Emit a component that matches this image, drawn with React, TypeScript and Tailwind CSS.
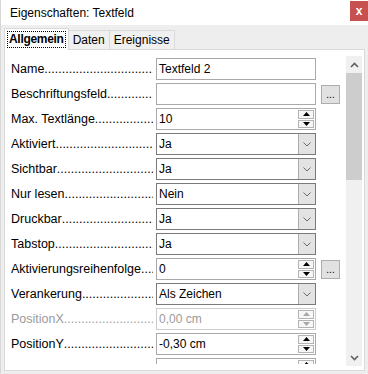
import React from 'react';

type Row = {
  label: string;
  kind: 'text' | 'spin' | 'select';
  value: string;
  button?: boolean;
  disabled?: boolean;
};

const rows: Row[] = [
  { label: 'Name', kind: 'text', value: 'Textfeld 2' },
  { label: 'Beschriftungsfeld', kind: 'text', value: '', button: true },
  { label: 'Max. Textlänge', kind: 'spin', value: '10' },
  { label: 'Aktiviert', kind: 'select', value: 'Ja' },
  { label: 'Sichtbar', kind: 'select', value: 'Ja' },
  { label: 'Nur lesen', kind: 'select', value: 'Nein' },
  { label: 'Druckbar', kind: 'select', value: 'Ja' },
  { label: 'Tabstop', kind: 'select', value: 'Ja' },
  { label: 'Aktivierungsreihenfolge', kind: 'spin', value: '0', button: true },
  { label: 'Verankerung', kind: 'select', value: 'Als Zeichen' },
  { label: 'PositionX', kind: 'spin', value: '0,00 cm', disabled: true },
  { label: 'PositionY', kind: 'spin', value: '-0,30 cm' },
  { label: 'Breite', kind: 'spin', value: '10,01 cm' },
];

const DOTS = '.'.repeat(80);

function Triangle({ up, disabled }: { up?: boolean; disabled?: boolean }) {
  return (
    <svg width="7" height="4" viewBox="0 0 7 4">
      <path
        d={up ? 'M0 4 L3.5 0 L7 4 Z' : 'M0 0 L3.5 4 L7 0 Z'}
        fill={disabled ? '#a8a8a8' : '#000'}
      />
    </svg>
  );
}

function Spin({ disabled }: { disabled?: boolean }) {
  return (
    <div className="flex h-full w-[17px] flex-col gap-[1px] py-[1px] pr-[1px]">
      <div className="flex flex-1 items-center justify-center border border-[#b4b4b4] bg-[#f7f7f7]">
        <Triangle up disabled={disabled} />
      </div>
      <div className="flex flex-1 items-center justify-center border border-[#b4b4b4] bg-[#f7f7f7]">
        <Triangle disabled={disabled} />
      </div>
    </div>
  );
}

function Field({ row }: { row: Row }) {
  const border =
    row.kind === 'select'
      ? 'border-[#7a7a7a]'
      : row.disabled
        ? 'border-[#cccccc]'
        : 'border-[#a9a9a9]';
  return (
    <div className={`flex h-[22px] w-[160px] items-center border ${border} bg-white`}>
      <span
        className={`flex-1 truncate pl-[2px] text-[12px] ${row.disabled ? 'text-[#9a9a9a]' : 'text-black'}`}
      >
        {row.value}
      </span>
      {row.kind === 'spin' && <Spin disabled={row.disabled} />}
      {row.kind === 'select' && (
        <div className="flex h-full w-[17px] items-center justify-center border-l border-[#adadad] bg-[#e3e3e3]">
          <svg width="8" height="5" viewBox="0 0 8 5">
            <path d="M0.5 0.5 L4 4 L7.5 0.5" fill="none" stroke="#6a6a6a" strokeWidth="1" />
          </svg>
        </div>
      )}
    </div>
  );
}

export default function App() {
  return (
    <div
      className="flex h-[374px] w-[368px] flex-col overflow-hidden border-l border-[#d8d8d8] bg-[#eeeeee] text-black"
      style={{ fontFamily: '"Liberation Sans", Arial, sans-serif' }}
    >
      {/* Title bar */}
      <div className="flex h-[25px] shrink-0 items-start justify-between bg-white">
        <span className="pl-[9px] pt-[4px] text-[12px]">Eigenschaften: Textfeld</span>
        <div className="mt-[1px] flex h-[20px] w-[18px] items-center justify-center bg-[#c75050] text-[12px] font-bold leading-none text-white">
          x
        </div>
      </div>

      {/* Tabs */}
      <div className="flex h-[24px] shrink-0 items-end pl-[3px]">
        <div className="relative z-10 -mb-[1px] flex h-[22px] items-center border border-b-0 border-[#d9d9d9] bg-white px-[2px]">
          <span className="border border-dotted border-black px-[1px] text-[12px] font-bold leading-[15px] tracking-[-0.3px]">
            Allgemein
          </span>
        </div>
        <div className="flex h-[19px] items-center border border-b-0 border-l-0 border-[#d9d9d9] bg-[#f0f0f0] px-[4px] text-[12px]">
          Daten
        </div>
        <div className="flex h-[19px] items-center border border-b-0 border-l-0 border-[#d9d9d9] bg-[#f0f0f0] px-[4px] text-[12px]">
          Ereignisse
        </div>
      </div>

      {/* Panel */}
      <div className="mx-[3px] flex h-[322px] shrink-0 border border-[#d9d9d9] bg-white pb-[3px] pl-[6px] pr-[2px] pt-[6px]">
        <div className="flex h-[308px] min-h-0 flex-1 flex-col gap-[3px] overflow-hidden pt-[2px]">
          {rows.map((row) => (
            <div key={row.label} className="flex h-[22px] shrink-0 items-center">
              <div
                className={`flex w-[142px] overflow-hidden whitespace-nowrap text-[12.5px] ${row.disabled ? 'text-[#9a9a9a]' : 'text-black'}`}
              >
                <span>{row.label}</span>
                <span className="overflow-hidden">{DOTS}</span>
              </div>
              <div className="ml-[3px]">
                <Field row={row} />
              </div>
              {row.button && (
                <div className="ml-[5px] flex h-[19px] w-[19px] items-end justify-center border border-[#adadad] bg-[#e1e1e1] pb-[3px] text-[10px] leading-none">
                  ...
                </div>
              )}
            </div>
          ))}
        </div>

        {/* Scrollbar */}
        <div className="flex h-[310px] w-[16px] flex-col bg-[#f0f0f0]">
          <div className="flex h-[17px] items-center justify-center">
            <svg width="9" height="6" viewBox="0 0 9 6">
              <path d="M1 5 L4.5 1.5 L8 5" fill="none" stroke="#606060" strokeWidth="1.6" />
            </svg>
          </div>
          <div className="h-[107px] bg-[#cdcdcd]" />
          <div className="flex-1" />
          <div className="flex h-[17px] items-center justify-center">
            <svg width="9" height="6" viewBox="0 0 9 6">
              <path d="M1 1 L4.5 4.5 L8 1" fill="none" stroke="#606060" strokeWidth="1.6" />
            </svg>
          </div>
        </div>
      </div>
    </div>
  );
}
